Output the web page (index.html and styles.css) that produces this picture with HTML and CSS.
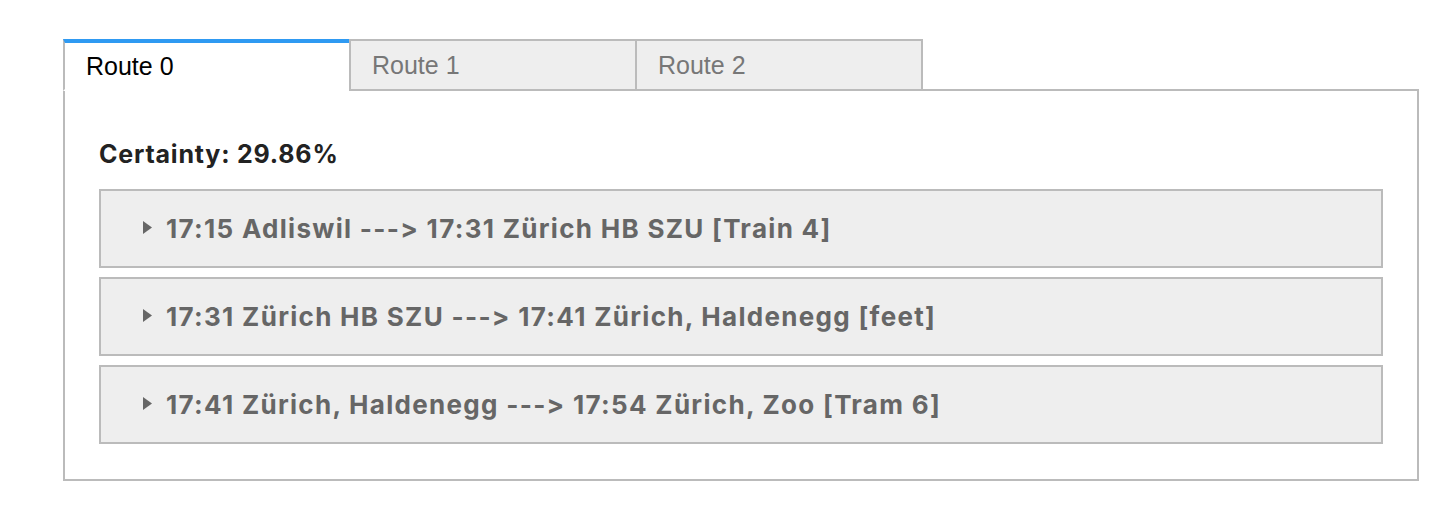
FILE: index.html
```html
<!DOCTYPE html>
<html>
<head>
<meta charset="utf-8">
<link rel="stylesheet" href="styles.css">
</head>
<body>
<div class="tabs-wrap">
  <div class="tab-bar">
    <div class="tab active">Route 0</div>
    <div class="tab">Route 1</div>
    <div class="tab">Route 2</div>
  </div>
  <div class="panel">
    <div class="certainty">Certainty: 29.86%</div>
    <div class="legs">
      <div class="leg"><span class="marker"><svg width="9" height="13" viewBox="0 0 9 13"><path d="M0 0 L9 6.5 L0 13 Z" fill="#666"/></svg></span>17:15 Adliswil ---&gt; 17:31 Zürich HB SZU [Train 4]</div>
      <div class="leg"><span class="marker"><svg width="9" height="13" viewBox="0 0 9 13"><path d="M0 0 L9 6.5 L0 13 Z" fill="#666"/></svg></span>17:31 Zürich HB SZU ---&gt; 17:41 Zürich, Haldenegg [feet]</div>
      <div class="leg"><span class="marker"><svg width="9" height="13" viewBox="0 0 9 13"><path d="M0 0 L9 6.5 L0 13 Z" fill="#666"/></svg></span>17:41 Zürich, Haldenegg ---&gt; 17:54 Zürich, Zoo [Tram 6]</div>
    </div>
  </div>
</div>
</body>
</html>
```

FILE: styles.css
```css
html, body {
  margin: 0;
  padding: 0;
  background: #fff;
}
body {
  padding: 39px 0 0 63px;
}
.tabs-wrap {
  width: 1356px;
}
.tab-bar {
  display: flex;
  position: relative;
  z-index: 1;
  margin-bottom: -2px;
}
.tab {
  box-sizing: border-box;
  width: 288px;
  height: 52px;
  margin-left: -2px;
  padding-left: 21px;
  display: flex;
  align-items: center;
  border: 2px solid #bbb;
  background: #eee;
  color: #777;
  font-family: "Liberation Sans", Arial, sans-serif;
  font-size: 25px;
}
.tab:first-child {
  margin-left: 0;
}
.tab.active {
  background: #fff;
  color: #000;
  border-top: 4px solid #2f9af2;
  border-bottom-color: #fff;
  z-index: 0;
}
.tab.active + .tab {
  position: relative;
  z-index: 2;
}
.panel {
  box-sizing: border-box;
  border: 2px solid #bbb;
  height: 392px;
  padding: 48px 34px 34px 34px;
  font-family: "Inter", "Noto Sans", sans-serif;
  font-feature-settings: "liga" 0, "calt" 0;
  font-variant-ligatures: none;
}
.certainty {
  font-size: 25px;
  font-weight: 700;
  letter-spacing: 0.8px;
  color: #222;
  line-height: 30px;
  margin-bottom: 20px;
}
.legs {
  display: flex;
  flex-direction: column;
  gap: 9px;
}
.leg {
  box-sizing: border-box;
  height: 79px;
  border: 2px solid #bbb;
  background: #eee;
  color: #666;
  font-size: 26px;
  font-weight: 700;
  letter-spacing: 1.3px;
  display: flex;
  align-items: center;
  padding-left: 42px;
}
.marker {
  display: inline-flex;
  width: 23px;
  margin-top: -2px;
}
```
